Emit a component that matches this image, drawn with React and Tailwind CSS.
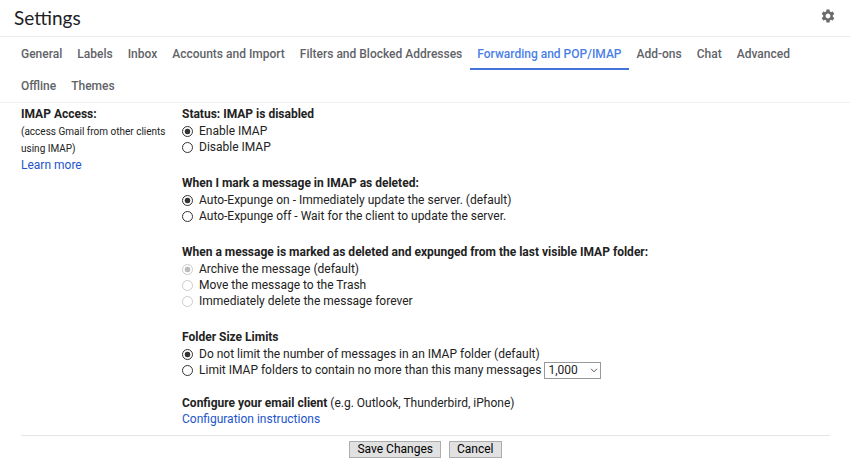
import React from "react";
import { MdSettings } from "react-icons/md";

const tabs = [
    "General",
    "Labels",
    "Inbox",
    "Accounts and Import",
    "Filters and Blocked Addresses",
    "Forwarding and POP/IMAP",
    "Add-ons",
    "Chat",
    "Advanced",
    "Offline",
    "Themes",
];

const Radio = ({ name, label, checked, disabled, children }) => {
    return (
        <div className="flex items-center h-4">
            <label className="flex items-center gap-1.5">
                <input
                    type="radio"
                    name={name}
                    defaultChecked={checked}
                    disabled={disabled}
                    className="appearance-none shrink-0 w-[11px] h-[11px] rounded-full border border-[#333] bg-white checked:bg-[radial-gradient(circle,#333_0_2.5px,transparent_3.2px)] disabled:border-[#ccc] disabled:checked:bg-[radial-gradient(circle,#bbb_0_2.5px,transparent_3.2px)]"
                />
                {label}
            </label>
            {children}
        </div>
    );
};

const Group = ({ title, children }) => {
    return (
        <fieldset className="mb-5">
            <legend className="font-bold leading-[17px]">{title}</legend>
            {children}
        </fieldset>
    );
};

const App = () => {
    return (
        <div className="bg-white text-[#222] font-['Roboto',sans-serif] text-[12px] leading-4">
            <header className="flex items-center justify-between h-[37px] border-b border-[#ececec] px-3.5">
                <h1 className="font-['Lato',sans-serif] text-[19px] leading-6 text-[#202124]">Settings</h1>
                <button aria-label="Settings menu" className="-mt-1 text-[#6b6b6b]">
                    <MdSettings size={16} />
                </button>
            </header>

            <nav className="flex flex-wrap gap-x-px pt-px pl-3.5 pr-8 border-b border-[#f0f0f0] font-medium text-[#5f6368]">
                {tabs.map((tab) => (
                    <a
                        key={tab}
                        href="#"
                        className={
                            tab === "Forwarding and POP/IMAP"
                                ? "h-8 px-[7px] leading-8 border-b-2 border-[#4272db] text-[#4a7fe8]"
                                : "h-8 px-[7px] leading-8"
                        }
                    >
                        {tab}
                    </a>
                ))}
            </nav>

            <form className="pl-[21px] pr-5 pt-[3px]">
                <div className="flex">
                    <div className="w-[161px] shrink-0">
                        <h2 className="font-bold leading-[17px]">IMAP Access:</h2>
                        <p className="text-[10px] leading-[17px]">(access Gmail from other clients using IMAP)</p>
                        <a href="#" className="text-[#2255cc]">Learn more</a>
                    </div>

                    <div className="flex-1">
                        <Group title="Status: IMAP is disabled">
                            <Radio name="status" label="Enable IMAP" checked />
                            <Radio name="status" label="Disable IMAP" />
                        </Group>
                        <Group title="When I mark a message in IMAP as deleted:">
                            <Radio name="expunge" label="Auto-Expunge on - Immediately update the server. (default)" checked />
                            <Radio name="expunge" label="Auto-Expunge off - Wait for the client to update the server." />
                        </Group>
                        <Group title="When a message is marked as deleted and expunged from the last visible IMAP folder:">
                            <Radio name="deleted" label="Archive the message (default)" checked disabled />
                            <Radio name="deleted" label="Move the message to the Trash" disabled />
                            <Radio name="deleted" label="Immediately delete the message forever" disabled />
                        </Group>
                        <fieldset className="mb-[17px]">
                            <legend className="font-bold leading-[17px]">Folder Size Limits</legend>
                            <Radio name="limit" label="Do not limit the number of messages in an IMAP folder (default)" checked />
                            <Radio name="limit" label="Limit IMAP folders to contain no more than this many messages">
                                <span className="relative ml-[3px]">
                                    <select aria-label="Message limit" className="block appearance-none w-[57px] h-[17px] border border-[#999] bg-white px-[3px] leading-[15px]">
                                        <option>1,000</option>
                                        <option>2,000</option>
                                        <option>5,000</option>
                                    </select>
                                    <svg viewBox="0 0 8 5" className="absolute right-[3px] top-[6px] w-2 h-[5px] pointer-events-none" fill="none" stroke="#555">
                                        <path d="M1 .8 4 3.8 7 .8" />
                                    </svg>
                                </span>
                            </Radio>
                        </fieldset>
                        <p>
                            <b>Configure your email client</b> (e.g. Outlook, Thunderbird, iPhone)
                        </p>
                        <a href="#" className="text-[#2255cc]">Configuration instructions</a>
                    </div>
                </div>

                <div className="flex justify-center gap-2 mt-2 pt-[5px] border-t border-[#e5e5e5]">
                    <button type="submit" className="h-[17px] px-[7px] border border-[#adadad] bg-[#e1e1e1] leading-[15px] text-black">Save Changes</button>
                    <button type="button" className="h-[17px] px-[7px] border border-[#adadad] bg-[#e1e1e1] leading-[15px] text-black">Cancel</button>
                </div>
            </form>
        </div>
    );
};

export default App;
